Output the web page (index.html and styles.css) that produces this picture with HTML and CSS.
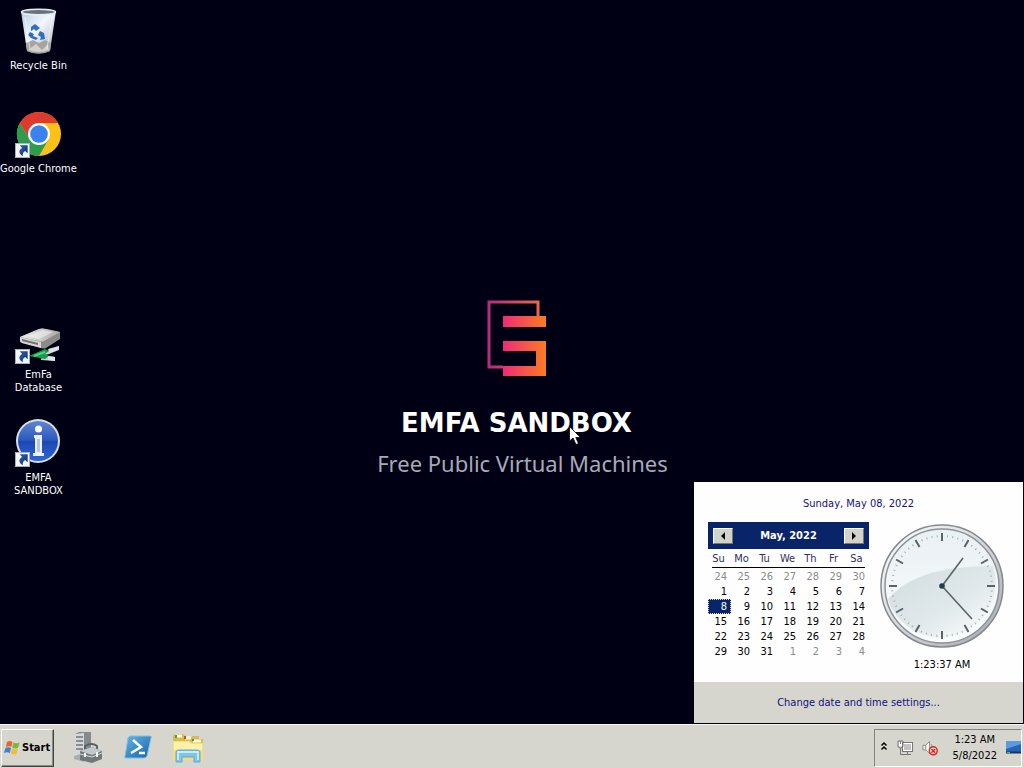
FILE: index.html
```html
<!DOCTYPE html>
<html lang="en">
<head>
<meta charset="utf-8">
<title>EMFA Sandbox</title>
<link rel="stylesheet" href="styles.css">
</head>
<body>
<svg class="defs" width="0" height="0" aria-hidden="true">
  <defs>
    <linearGradient id="blueArrow" x1="0" y1="0" x2="1" y2="1"><stop offset="0" stop-color="#2f62b4"/><stop offset="1" stop-color="#0a2a70"/></linearGradient>
    <symbol id="shortcut" viewBox="0 0 16 16">
      <rect x=".5" y=".5" width="15" height="15" fill="#f4f6fa" stroke="#a8b4c4"/>
      <path d="M5 2.500H13.500V11L10.800 8.600C8.500 10 8 11.800 8.300 14C5.500 12.800 4.200 10.500 4.800 8.300C5.300 6.800 6.400 5.900 7.600 5.200Z" fill="url(#blueArrow)"/>
    </symbol>
  </defs>
</svg>

<main class="desktop">
  <section class="wallpaper">
    <svg class="brand" width="60" height="78" viewBox="0 0 60 78" aria-hidden="true">
      <defs>
        <linearGradient id="frame" gradientUnits="userSpaceOnUse" x1="0" y1="0" x2="53" y2="0"><stop offset="0" stop-color="#b62a80"/><stop offset="1" stop-color="#e96a48"/></linearGradient>
        <linearGradient id="bars" gradientUnits="userSpaceOnUse" x1="16" y1="0" x2="59" y2="0"><stop offset="0" stop-color="#ef2b78"/><stop offset="1" stop-color="#fb7c20"/></linearGradient>
      </defs>
      <path d="M16 68H2V3H51V18" fill="none" stroke="url(#frame)" stroke-width="3"/>
      <path d="M16 17H59V28H16ZM16 42H59V77H16V67H49V52H16Z" fill="url(#bars)"/>
    </svg>
    <h1 class="title">EMFA SANDBOX</h1>
    <p class="subtitle">Free Public Virtual Machines</p>
  </section>

  <nav class="shortcuts" aria-label="Desktop">
    <button class="shortcut">
      <svg width="48" height="48" viewBox="0 0 48 48" aria-hidden="true">
        <defs><linearGradient id="bin" x1="0" x2="1" y1="0" y2="1"><stop offset="0" stop-color="#b9cce0"/><stop offset=".45" stop-color="#f1f7fd"/><stop offset="1" stop-color="#a7adb2"/></linearGradient></defs>
        <path d="M7 4H42L36 44Q25 49 13 44Z" fill="url(#bin)"/>
        <path d="M12 36L19 33 25 36 31 33 37 36 36 44Q25 49 13 44Z" fill="#a5a4a0"/>
        <path d="M14 43L22 37 28 43 34 37 35 43Q25 47 14 43" fill="#d2d1cc"/>
        <ellipse cx="24.500" cy="5" rx="17" ry="2.800" fill="#69737e" stroke="#e8eef4" stroke-width="1.500"/>
        <g fill="#2e6fc0"><path d="M17 20L21 17 26 21 22 24 20 22 17 24Z"/><path d="M26 24L30 26 31 32 26 33 27 30 24 28Z"/><path d="M16 25L20 27 19 29 24 31 22 33 17 31 14 28Z"/></g>
        <path d="M11 10L16 42M38 10L33 42" stroke="#fff" opacity=".6"/>
      </svg>
      <span class="label">Recycle Bin</span>
    </button>
    <button class="shortcut">
      <svg width="48" height="48" viewBox="0 0 48 48" aria-hidden="true">
        <g transform="translate(0 -2)">
          <circle cx="25" cy="26" r="22" fill="#fbc116"/>
          <path d="M5.900 15A22 22 0 0 1 44.100 15H25V26L15.500 31.500Z" fill="#df3a2e"/>
          <path d="M5.900 15L15.500 31.500L25 37L34.500 31.500L25 48A22 22 0 0 1 5.900 15Z" fill="#2d9c4c"/>
          <circle cx="25" cy="26" r="11" fill="#fff"/><circle cx="25" cy="26" r="8.800" fill="#3c82ee"/>
        </g>
        <use href="#shortcut" x="1" y="33" width="15" height="15"/>
      </svg>
      <span class="label">Google Chrome</span>
    </button>
    <button class="shortcut database">
      <svg width="48" height="48" viewBox="0 0 48 48" aria-hidden="true">
        <defs><linearGradient id="disk" x1="0" x2="1"><stop offset="0" stop-color="#eeeeec"/><stop offset="1" stop-color="#aaa9a6"/></linearGradient></defs>
        <g transform="translate(0 2)">
          <path d="M31 37L31 34 45 28V32L35 36ZM28 37L41 39V43L27 42Z" fill="#c9ced4"/>
          <path d="M15 38L31 31 35 33 31 36 35 38 31 41Z" fill="#159c49"/><path d="M20 38L31 34" fill="none" stroke="#52d27c" stroke-width="2"/>
          <path d="M6 19L25 11Q28 10 32 11L46 14V21L32 30Q30 31 27 30L8 25Q6 24 6 23Z" fill="#8b8c89"/>
          <path d="M6 19L25 11Q28 10 32 11L46 14L30 23Q28 24 25 23Z" fill="url(#disk)"/>
          <path d="M6 19L27 24V30L8 25Q6 24 6 23Z" fill="#d5d5d1"/><path d="M8 21L24 25V27L8 23Z" fill="#6f726f"/>
          <path d="M14 18L29 12L39 14L25 21Z" fill="#fff" opacity=".45"/>
          <path d="M34 31L45 28V31L36 35ZM34 38L41 39V43L34 42Z" fill="#dfe3e8"/>
        </g>
        <use href="#shortcut" x="1" y="33" width="15" height="15"/>
      </svg>
      <span class="label">EmFa Database</span>
    </button>
    <button class="shortcut sandbox">
      <svg width="48" height="48" viewBox="0 0 48 48" aria-hidden="true">
        <defs><linearGradient id="info" x1="0" x2="0" y1="0" y2="1"><stop offset="0" stop-color="#5f86d2"/><stop offset=".48" stop-color="#2b58bd"/><stop offset=".52" stop-color="#1b48b0"/><stop offset="1" stop-color="#2d67d4"/></linearGradient></defs>
        <circle cx="24" cy="22" r="22" fill="#d9dee6"/><circle cx="24" cy="22" r="20" fill="url(#info)"/>
        <circle cx="24.500" cy="10" r="3.500" fill="#fff"/><path d="M20 16H28V34H30V37H19V34H21V19H20Z" fill="#edf1f7"/><rect x="23" y="20" width="3" height="13" fill="#b9c6dc"/>
        <use href="#shortcut" x="1" y="33" width="15" height="15"/>
      </svg>
      <span class="label">EMFA SANDBOX</span>
    </button>
  </nav>

  <section class="flyout" aria-label="Date and time">
    <div class="flyout-body">
      <a class="date-link" href="#date">Sunday, May 08, 2022</a>
      <div class="panels">
        <div class="calendar">
          <header class="month">
            <button class="step" aria-label="Previous month"><svg width="4" height="8" viewBox="0 0 4 8"><path d="M4 0V8L0 4Z"/></svg></button>
            <strong>May, 2022</strong>
            <button class="step" aria-label="Next month"><svg width="4" height="8" viewBox="0 0 4 8"><path d="M0 0V8L4 4Z"/></svg></button>
          </header>
          <table class="days">
            <thead><tr><th>Su</th><th>Mo</th><th>Tu</th><th>We</th><th>Th</th><th>Fr</th><th>Sa</th></tr></thead>
            <tbody>
              <tr class="other"><td>24</td><td>25</td><td>26</td><td>27</td><td>28</td><td>29</td><td>30</td></tr>
              <tr><td>1</td><td>2</td><td>3</td><td>4</td><td>5</td><td>6</td><td>7</td></tr>
              <tr><td class="today">8</td><td>9</td><td>10</td><td>11</td><td>12</td><td>13</td><td>14</td></tr>
              <tr><td>15</td><td>16</td><td>17</td><td>18</td><td>19</td><td>20</td><td>21</td></tr>
              <tr><td>22</td><td>23</td><td>24</td><td>25</td><td>26</td><td>27</td><td>28</td></tr>
              <tr><td>29</td><td>30</td><td>31</td><td class="other">1</td><td class="other">2</td><td class="other">3</td><td class="other">4</td></tr>
            </tbody>
          </table>
        </div>
        <div class="clock">
          <svg width="126" height="126" viewBox="0 0 126 126" aria-hidden="true">
            <defs>
              <linearGradient id="rim" x1="0" y1="0" x2="1" y2="1"><stop offset="0" stop-color="#fff"/><stop offset=".5" stop-color="#d5d8dc"/><stop offset="1" stop-color="#a2a6aa"/></linearGradient>
              <linearGradient id="face" x1="0" y1="0" x2="0" y2="1"><stop offset="0" stop-color="#e9f0f3"/><stop offset="1" stop-color="#fbfdfd"/></linearGradient>
              <linearGradient id="shade" x1="0" y1="0" x2="1" y2="1"><stop offset="0" stop-color="#ccd9dc"/><stop offset=".55" stop-color="#dce5e8"/><stop offset="1" stop-color="#fff"/></linearGradient>
            </defs>
            <circle cx="63" cy="63" r="61" fill="url(#rim)" stroke="#85898d" stroke-width="1.500"/>
            <circle cx="63" cy="63" r="57" fill="url(#face)" stroke="#8e9398" stroke-width="1.500"/>
            <path d="M9 76C28 54 60 43 114 43A55 55 0 0 1 9 76Z" fill="url(#shade)" opacity=".85"/>
            <circle cx="63" cy="63" r="50" fill="none" stroke="#a5acb1" stroke-width="2" stroke-dasharray="1 4.236" stroke-dashoffset=".5"/>
            <g stroke="#59646a" stroke-width="2">
              <path d="M63 10V18M63 108V116M10 63H18M108 63H116"/>
              <g transform="rotate(30 63 63)"><path d="M63 10V18M63 108V116M10 63H18M108 63H116"/></g>
              <g transform="rotate(60 63 63)"><path d="M63 10V18M63 108V116M10 63H18M108 63H116"/></g>
            </g>
            <path d="M63 63L84 35M63 63L93 96" stroke="#59646a" stroke-width="1.600"/><circle cx="63" cy="63" r="2.800" fill="#263c46"/>
          </svg>
          <time>1:23:37 AM</time>
        </div>
      </div>
    </div>
    <footer class="flyout-footer"><a href="#settings">Change date and time settings...</a></footer>
  </section>

  <svg class="cursor" width="12" height="19" viewBox="0 0 12 19" aria-hidden="true"><path d="M.5 .5V15L4 12 7 18.500 9.500 17.500 6.800 11.500H11.500Z" fill="#fff" stroke="#000" stroke-width=".8"/></svg>
</main>

<footer class="taskbar">
  <button class="start">
    <svg width="17" height="16" viewBox="0 0 17 16" aria-hidden="true"><path d="M3 2Q6 0 8.500 2L7.300 7Q5 5.500 1.800 7Z" fill="#e7652b"/><path d="M9.500 2.500Q12 4 15.500 2.500L14 8Q11 9 8.200 7.500Z" fill="#79b83c"/><path d="M1.500 8Q4.500 6.500 7 8L5.800 13Q3 11.500 0 13Z" fill="#3b83cd"/><path d="M8 8.500Q11 10 13.800 9L12.500 14Q9.500 15 6.800 13.500Z" fill="#f6bd2b"/></svg>
    <span>Start</span>
  </button>
  <button class="task" aria-label="Server Manager">
    <svg width="32" height="32" viewBox="0 0 32 32"><path d="M3 2L7 0H19V20L10 27H3Z" fill="#858b8c"/><path d="M3 2L12 1V27L3 25Z" fill="#d4d8d8"/><path d="M4 5H11M4 9H11M4 13H11M4 17H11" stroke="#6c7477" stroke-width="1.500"/><path d="M2 24L12 21V30L2 27Z" fill="#a8adad"/><path d="M13 18V14Q20 10 25 14V18" fill="none" stroke="#596163" stroke-width="2"/><path d="M8 19L20 15 30 19V27L20 31 8 28Z" fill="#70787a"/><path d="M8 19L20 15 30 19 20 23Z" fill="#c3c8c8"/><path d="M8 22L20 25 30 21" fill="none" stroke="#d7dbdb"/><path d="M13 21V25M25 20V25" stroke="#f3f3ef" stroke-width="2"/></svg>
  </button>
  <button class="task" aria-label="PowerShell">
    <svg width="32" height="32" viewBox="0 0 32 32"><defs><linearGradient id="ps" x1="0" y1="0" x2="1" y2="1"><stop offset="0" stop-color="#65b5e5"/><stop offset="1" stop-color="#1464a8"/></linearGradient></defs><path d="M8 4H28Q30 4 29 6L25 24Q24 26 22 26H4Q2 26 3 24L6 6Q7 4 8 4Z" fill="url(#ps)" stroke="#7fc0e7"/><path d="M11 8L19 15L9 21M17 21H23" fill="none" stroke="#fff" stroke-width="2.500"/></svg>
  </button>
  <button class="task" aria-label="Windows Explorer">
    <svg width="32" height="32" viewBox="0 0 32 32"><path d="M1 5Q1 2 4 2H11L14 5H20V4H27V7H31V28H1Z" fill="#d9b951"/><path d="M3 4H10M13 6H19M21 9H29" stroke="#fff9db" stroke-width="3"/><path d="M4 3V6" stroke="#43a548" stroke-width="2"/><path d="M13 4V7" stroke="#c84a30" stroke-width="2"/><path d="M21 7V9" stroke="#348ac4" stroke-width="2"/><path d="M1 9H18L20 11H31V28H1Z" fill="#f5df79"/><path d="M2 10H17L19 12H30V18H2Z" fill="#fff1a8"/><path d="M4 30V20Q4 18 7 18H25Q28 18 28 20V30H22V25H10V30Z" fill="#83c4e8" stroke="#5ba8d7"/><path d="M6 28V20H26V28" fill="none" stroke="#c8edfa" stroke-width="2"/></svg>
  </button>
  <div class="tray">
    <button aria-label="Show hidden icons"><svg width="8" height="14" viewBox="0 0 8 14"><path d="M1.500 4.500L4 2 6.500 4.500M1.500 8.500L4 6 6.500 8.500" fill="none" stroke="#000" stroke-width="1.500"/></svg></button>
    <button aria-label="Network"><svg width="16" height="16" viewBox="0 0 16 16"><rect x="5.500" y="2.500" width="10" height="9" fill="#c4c4be" stroke="#777"/><rect x="6.500" y="3.500" width="8" height="7" fill="none" stroke="#fff"/><path d="M1 1H6V6Q6 8 3.500 8T1 6ZM3.500 8V14.500H12M10.500 12V14M7 14.500H14" fill="none" stroke="#777"/><path d="M2 2H5V6H2Z" fill="#fff"/><path d="M3.500 1V4" stroke="#777"/></svg></button>
    <button aria-label="Volume muted"><svg width="16" height="16" viewBox="0 0 17 16"><path d="M1 5H4L8 1V14L4 10H1Z" fill="#f5f5f2" stroke="#888"/><path d="M4 5V10M10 4Q12 7 10 10" fill="none" stroke="#888"/><circle cx="12" cy="11" r="4.200" fill="#f4e2df" stroke="#d4291f" stroke-width="1.600"/><path d="M10 9L14 13M14 9L10 13" stroke="#d4291f" stroke-width="1.600"/></svg></button>
    <button class="time"><span>1:23 AM</span><span>5/8/2022</span></button>
    <button class="show-desktop" aria-label="Show desktop"><svg width="15" height="13" viewBox="0 0 15 13"><rect width="15" height="11" fill="#2765ba"/><path d="M0 0H15V3L0 8Z" fill="#5d9be0"/><path d="M0 11.500H15" stroke="#17345f" stroke-width="2"/><path d="M1 11.500H4" stroke="#73b84a"/></svg></button>
  </div>
</footer>
</body>
</html>
```
FILE: styles.css
```css
* { box-sizing: border-box; }

body {
  margin: 0;
  height: 100vh;
  display: flex;
  flex-direction: column;
  overflow: hidden;
  background: #000014;
  font: 11px/13px "DejaVu Sans Condensed", "DejaVu Sans", sans-serif;
}

button {
  margin: 0;
  padding: 0;
  border: 0;
  background: none;
  color: inherit;
  font: inherit;
}

svg { display: block; flex: none; }
.defs { position: absolute; }
a { color: #14107a; text-decoration: none; }

.desktop { position: relative; flex: 1; min-height: 0; }

.wallpaper {
  position: absolute;
  inset: 0;
  display: flex;
  flex-direction: column;
  align-items: center;
  justify-content: center;
  padding: 56px 0 0 9px;
}

.title {
  margin: 28px 0 0;
  color: #fff;
  font: bold 26px/36px "DejaVu Sans", sans-serif;
}

.subtitle {
  margin: 4px 0 0;
  padding-left: 12px;
  color: #a9a9b8;
  font: 22px/36px "Noto Sans", sans-serif;
}

.shortcuts {
  position: relative;
  width: 76px;
  display: grid;
  grid-auto-rows: 103px;
  padding-top: 7px;
}

.shortcut {
  display: flex;
  flex-direction: column;
  align-items: center;
  gap: 4px;
  color: #fff;
  white-space: nowrap;
}

.database { grid-row: 4; }
.sandbox { grid-row: 5; }
.database .label, .sandbox .label { width: 60px; white-space: normal; }

.flyout {
  position: absolute;
  right: 1px;
  bottom: 1px;
  width: 329px;
  background: #fefefe;
}

.flyout-body {
  display: flex;
  flex-direction: column;
  align-items: center;
  gap: 12px;
  padding: 15px 14px 11px;
}

.panels { display: flex; gap: 10px; align-self: flex-start; }
.calendar { width: 161px; }

.month {
  display: flex;
  align-items: center;
  justify-content: space-between;
  height: 27px;
  padding: 0 5px;
  background: #0a246a;
  color: #fff;
}

.step {
  display: grid;
  place-items: center;
  width: 20px;
  height: 16px;
  border: 1px solid;
  border-color: #fff #777 #777 #fff;
  background: #d4d3cb;
}

.days {
  width: 100%;
  table-layout: fixed;
  border-collapse: collapse;
}

.days th, .days td { padding: 0; line-height: 15px; }
.days th { height: 20px; padding: 0 2px 2px 0; color: #30305c; font-weight: normal; }
.days thead { background: linear-gradient(#000, #000) center calc(100% - 1px) / 153px 1px no-repeat; }
.days td { padding-right: 4px; color: #000; text-align: right; }
.days .other, .days .other td { color: #8b8b8b; }
.days .today { background: #0a246a; color: #fff; outline: 1px dotted #d5d8e4; outline-offset: -1px; }

.clock {
  display: flex;
  flex-direction: column;
  align-items: center;
  gap: 9px;
  padding-top: 1px;
}

.flyout-footer {
  display: grid;
  place-items: center;
  height: 41px;
  background: #d7d6ce;
}

.cursor { position: absolute; left: 569px; top: 426px; }

.taskbar {
  display: flex;
  align-items: center;
  gap: 18px;
  height: 44px;
  padding: 3px 2px 1px 1px;
  border-top: 1px solid #f7f7f3;
  background: #d7d6ce;
}

.start {
  display: flex;
  align-items: center;
  gap: 1px;
  width: 53px;
  height: 38px;
  padding-left: 2px;
  border: 1px solid;
  border-color: #fff #444 #444 #fff;
  box-shadow: inset -1px -1px #8a8983;
  font-weight: bold;
}

.tray {
  display: flex;
  align-items: center;
  gap: 9px;
  height: 38px;
  margin-left: auto;
  padding-left: 5px;
  border: 1px solid;
  border-color: #85847e #fff #fff #85847e;
}

.time { display: grid; margin: 0 0 0 6px; line-height: 16px; }
```
